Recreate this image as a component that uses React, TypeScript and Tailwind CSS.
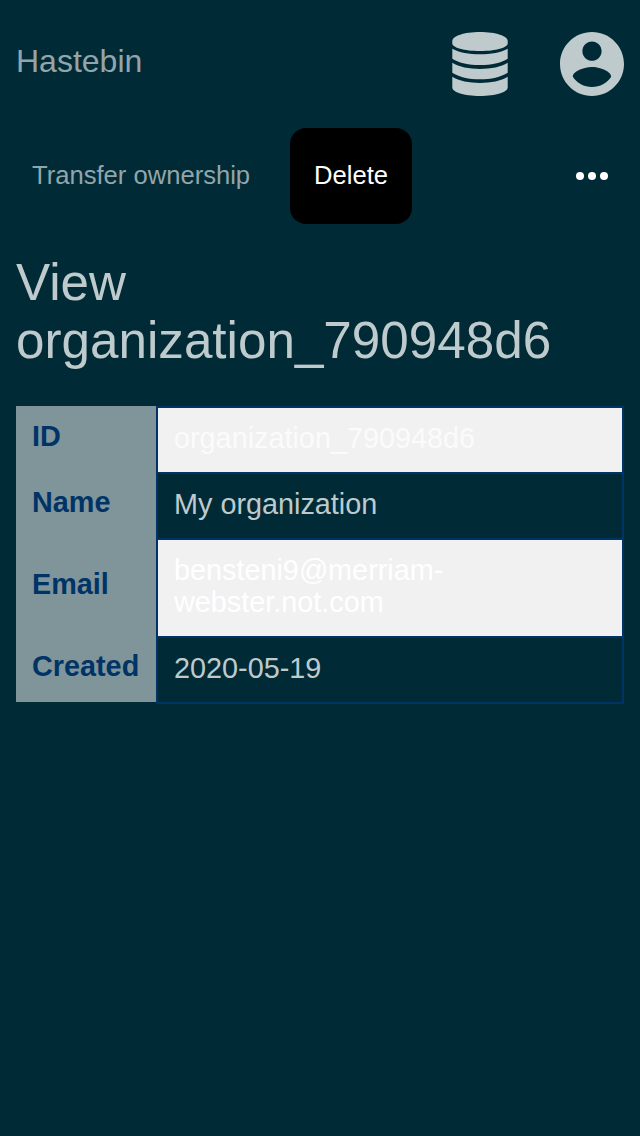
import React from "react";

type Field = { label: string; value: string; tone: string };

const fields: Field[] = [
  { label: "ID", value: "organization_790948d6", tone: "bg-[#f1f1f1] text-[#fbfbfb]" },
  { label: "Name", value: "My organization", tone: "text-[#bfcacd]" },
  { label: "Email", value: "bensteni9@merriam-webster.not.com", tone: "bg-[#f1f1f1] text-white" },
  { label: "Created", value: "2020-05-19", tone: "text-[#bfcacd]" },
];

function DatabaseIcon() {
  return (
    <svg className="h-16 w-16" viewBox="0 0 64 64" fill="currentColor" aria-hidden="true">
      <path d="M4.3 9C4.3 4 16 0 32 0s27.700 4 27.700 9v2.500C59.700 15.500 48 19 32 19S4.300 15.500 4.300 11.500z" />
      <path d="M4.300 16.700C11 20.500 21 22.200 32 22.200s21-1.700 27.700-5.500v10C53 31 43 33 32 33s-21-2-27.700-6.300z" />
      <path d="M4.300 30.700C11 35 21 36.900 32 36.900s21-1.900 27.700-6.200v10C53 45 43 47.300 32 47.300s-21-2.300-27.700-6.600z" />
      <path d="M4.300 44.700C11 49 21 50.900 32 50.900s21-1.900 27.700-6.200V55.500C59.700 60 48 64 32 64S4.300 60 4.300 55.500z" />
    </svg>
  );
}

function AccountIcon() {
  return (
    <svg className="h-16 w-16" viewBox="2 2 20 20" fill="currentColor" aria-hidden="true">
      <path d="M12 2C6.480 2 2 6.480 2 12s4.480 10 10 10 10-4.480 10-10S17.520 2 12 2zm0 3c1.660 0 3 1.340 3 3s-1.340 3-3 3-3-1.340-3-3 1.340-3 3-3zm0 14.200c-2.500 0-4.710-1.280-6-3.220.030-1.990 4-3.080 6-3.080 1.990 0 5.970 1.090 6 3.080-1.290 1.940-3.500 3.220-6 3.220z" />
    </svg>
  );
}

export default function App() {
  return (
    <div className="min-h-screen bg-[#002b36] font-['Liberation_Sans',Arial,sans-serif] text-[#bfcacd]">
      <header className="flex h-32 items-center justify-between px-4">
        <a className="-mt-1.5 text-[32px] leading-9 text-[#93a5aa]">Hastebin</a>
        <nav className="flex gap-12">
          <DatabaseIcon />
          <AccountIcon />
        </nav>
      </header>

      <div className="flex h-24 items-center pr-8 pl-4">
        <button className="h-24 px-4 pb-0.5 text-[25.6px] text-[#93a5aa]">Transfer ownership</button>
        <button className="ml-6 h-24 w-[122px] rounded-2xl bg-black pb-0.5 text-[25.6px] text-white">Delete</button>
        <button className="ml-auto text-white" aria-label="More">
          <svg className="block h-2 w-8" viewBox="0 0 32 8" fill="currentColor">
            <circle cx="4" cy="4" r="4" />
            <circle cx="16" cy="4" r="4" />
            <circle cx="28" cy="4" r="4" />
          </svg>
        </button>
      </div>

      <main className="px-4 pt-[30px]">
        <h1 className="text-[51.2px] leading-[58px]">
          View
          <br />
          organization_790948d6
        </h1>

        <dl className="mt-9 text-[28.8px] leading-8">
          {fields.map((field) => (
            <div key={field.label} className="group flex">
              <dt className="flex w-[140px] shrink-0 items-center bg-[#80959a] pb-1.5 pl-4 font-bold text-[#003366] group-last:mb-0.5">
                {field.label}
              </dt>
              <dd className={`grow border-2 border-b-0 border-[#003366] px-4 pt-3.5 pb-[18px] group-last:border-b-2 ${field.tone}`}>
                {field.value}
              </dd>
            </div>
          ))}
        </dl>
      </main>
    </div>
  );
}
